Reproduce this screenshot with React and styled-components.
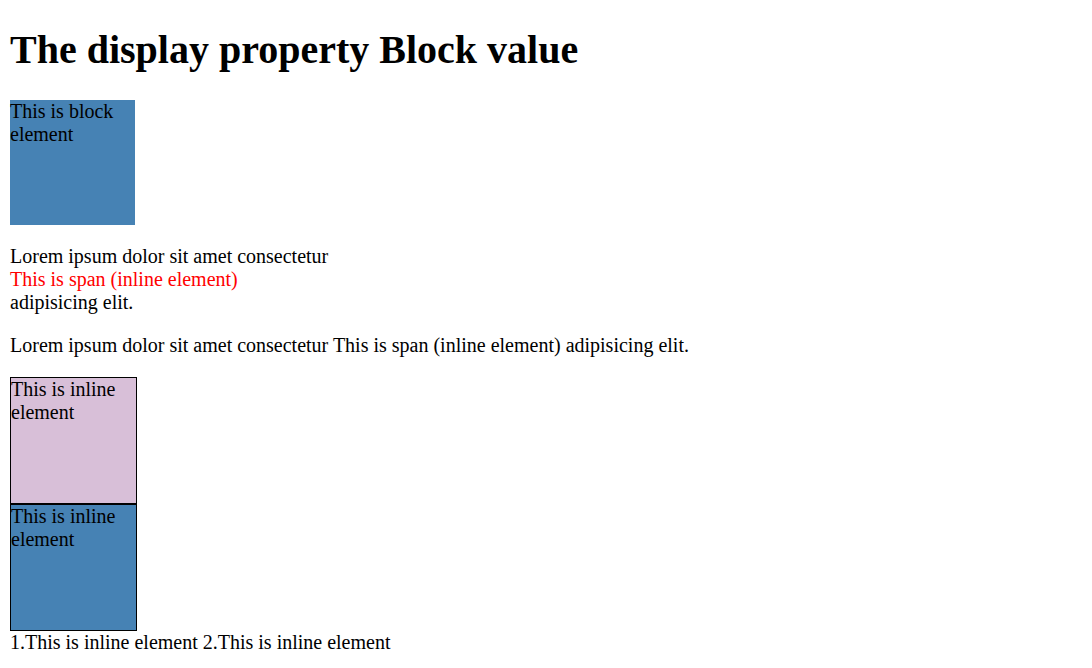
import React from "react";
import styled, { createGlobalStyle } from "styled-components";

const Global = createGlobalStyle`
  html, body { background: #fff; }
  body {
    margin: 0;
    padding: 0 10px 10px;
    font-family: "Liberation Serif", "Times New Roman", serif;
    font-size: 20px;
    color: #000;
  }
`;

const Title = styled.h1`
  font-size: 40px;
  font-weight: bold;
  margin: 26px 0 26.8px;
`;

const Box = styled.div`
  display: block;
  width: 125px;
  height: 125px;
  background: ${(p) => p.$bg};
  border: ${(p) => (p.$bordered ? "1px solid #000" : "none")};
`;

const Para = styled.p`
  margin: 20px 0;
`;

const Span = styled.span`
  display: ${(p) => (p.$block ? "block" : "inline")};
  color: ${(p) => p.$color || "inherit"};
`;

const Line = styled.div``;

export default function App() {
  return (
    <>
      <Global />
      <Title>The display property Block value</Title>
      <Box $bg="#4682b4">This is block element</Box>
      <Para>
        Lorem ipsum dolor sit amet consectetur
        <Span $block $color="#ff0000">This is span (inline element)</Span>
        adipisicing elit.
      </Para>
      <Para>
        Lorem ipsum dolor sit amet consectetur <Span>This is span (inline element)</Span> adipisicing elit.
      </Para>
      <Box $bg="#d8bfd8" $bordered>This is inline element</Box>
      <Box $bg="#4682b4" $bordered>This is inline element</Box>
      <Line>1.This is inline element 2.This is inline element</Line>
    </>
  );
}
